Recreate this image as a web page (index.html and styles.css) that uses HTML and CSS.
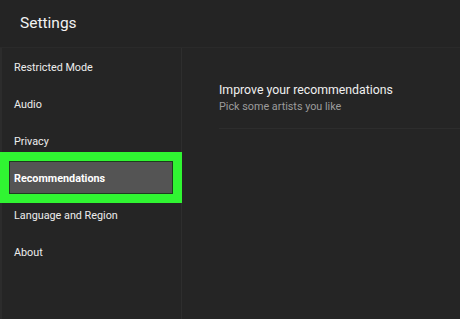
FILE: index.html
```html
<!DOCTYPE html>
<html lang="en">

<head>
    <meta charset="UTF-8">
    <meta name="viewport" content="width=device-width, initial-scale=1.0">
    <title>Settings</title>
    <link rel="stylesheet" href="styles.css">
</head>

<body>
    <header class="header">
        <h1>Settings</h1>
    </header>

    <div class="layout">
        <nav class="sidebar">
            <div class="menu-item">Restricted Mode</div>
            <div class="menu-item">Audio</div>
            <div class="menu-item">Privacy</div>
            <div class="menu-item active">Recommendations</div>
            <div class="menu-item">Language and Region</div>
            <div class="menu-item">About</div>
        </nav>

        <main class="content">
            <div class="setting">
                <div class="setting-title">Improve your recommendations</div>
                <div class="setting-sub">Pick some artists you like</div>
            </div>
        </main>
    </div>
</body>

</html>
```

FILE: styles.css
```css
* {
    margin: 0;
    padding: 0;
    box-sizing: border-box;
}

body {
    font-family: Roboto, 'Liberation Sans', Arial, sans-serif;
    background: #252525;
    color: #ececec;
    width: 460px;
    height: 319px;
    overflow: hidden;
}

.header {
    height: 48px;
    padding-left: 20px;
    background: #242424;
    border-bottom: 1px solid #2a2a2a;
}

.header h1 {
    font-size: 15.5px;
    font-weight: 400;
    line-height: 47px;
    color: #f2f2f2;
}

.layout {
    display: flex;
    height: 271px;
}

.sidebar {
    width: 182px;
    flex-shrink: 0;
    padding-top: 1px;
    border-left: 2px solid #2c2c2c;
    border-right: 1px solid #2e2e2e;
    background: #252525;
}

.menu-item {
    position: relative;
    z-index: 0;
    height: 37px;
    padding-left: 12px;
    display: flex;
    align-items: center;
    font-size: 10.8px;
    color: #ededed;
}

.menu-item.active {
    font-weight: 700;
    color: #ffffff;
}

/* highlight */
.menu-item.active::before {
    content: '';
    position: absolute;
    z-index: -1;
    left: 7px;
    right: 8px;
    top: 1px;
    bottom: 3px;
    background: #545454;
    border: 1px solid #1f3a1f;
    outline: 9px solid #30f532;
}

.content {
    flex: 1;
    padding: 34px 0 0 37px;
}

.setting {
    padding-bottom: 14px;
    border-bottom: 1px solid #2d2d2d;
}

.setting-title {
    font-size: 12.3px;
    line-height: 16px;
    color: #f0f0f0;
}

.setting-sub {
    margin-top: 1px;
    font-size: 10.8px;
    line-height: 15px;
    color: #9c9c9c;
}
```
